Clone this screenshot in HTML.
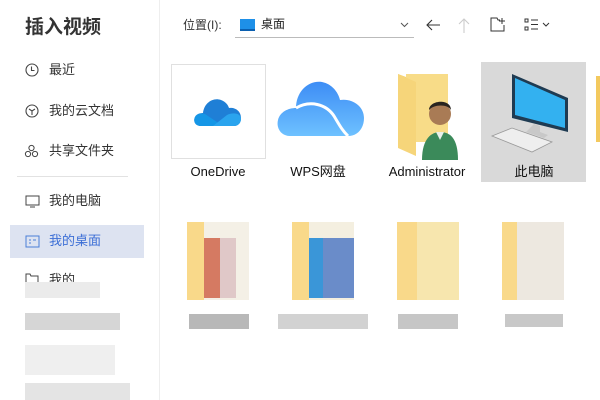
<!DOCTYPE html>
<html><head><meta charset="utf-8"><style>
*{margin:0;padding:0;box-sizing:border-box}
body{width:600px;height:400px;overflow:hidden;background:#fff;font-family:"Liberation Sans","Noto Sans CJK SC",sans-serif;position:relative;color:#222}
.a{position:absolute}
.side{font-size:13px;color:#333;line-height:16px}
.lbl{font-size:13px;color:#111;text-align:center;width:110px;line-height:16px}
.blk{position:absolute;background:#ccc}
</style></head><body>
<div class="a" style="left:25px;top:12px;font-size:19px;font-weight:bold;color:#333">插入视频</div>
<div class="a" style="left:159px;top:0;width:1px;height:400px;background:#eee"></div>

<svg class="a" style="left:25px;top:63px" width="14" height="14" viewBox="0 0 14 14"><circle cx="7" cy="7" r="6" fill="none" stroke="#444" stroke-width="1.1"/><path d="M6.5 3.5V7.5H9.5" fill="none" stroke="#444" stroke-width="1.1"/></svg>
<div class="a side" style="left:49px;top:62px">最近</div>
<svg class="a" style="left:25px;top:104px" width="14" height="14" viewBox="0 0 14 14"><circle cx="7" cy="7" r="6" fill="none" stroke="#444" stroke-width="1.1"/><path d="M4 5L7 7L10 5M7 7V11" fill="none" stroke="#444" stroke-width="1.1"/></svg>
<div class="a side" style="left:49px;top:103px">我的云文档</div>
<svg class="a" style="left:24px;top:144px" width="15" height="14" viewBox="0 0 15 14"><circle cx="7.5" cy="4" r="2.6" fill="none" stroke="#444"/><circle cx="4" cy="10" r="2.6" fill="none" stroke="#444"/><circle cx="11" cy="10" r="2.6" fill="none" stroke="#444"/></svg>
<div class="a side" style="left:49px;top:143px">共享文件夹</div>
<div class="a" style="left:17px;top:176px;width:111px;height:1px;background:#e2e2e2"></div>
<svg class="a" style="left:25px;top:195px" width="15" height="13" viewBox="0 0 15 13"><rect x="1" y="1" width="13" height="9" fill="none" stroke="#444"/><path d="M5 12H10" stroke="#444"/></svg>
<div class="a side" style="left:49px;top:193px">我的电脑</div>
<div class="a" style="left:10px;top:225px;width:134px;height:33px;background:#dde3f1"></div>
<svg class="a" style="left:25px;top:235px" width="15" height="13" viewBox="0 0 15 13"><rect x="1" y="1" width="13" height="11" fill="none" stroke="#4a7fd8"/><path d="M4 5H6M4 8H6M8 5H11" stroke="#4a7fd8"/></svg>
<div class="a side" style="left:49px;top:233px;color:#3d6fd6">我的桌面</div>
<svg class="a" style="left:25px;top:273px" width="14" height="12" viewBox="0 0 14 12"><path d="M1 11V1H5L6 3H13V11Z" fill="none" stroke="#444"/></svg>
<div class="a side" style="left:49px;top:272px">我的</div>
<div class="blk" style="left:25px;top:282px;width:75px;height:16px;background:#ebebeb"></div>
<div class="blk" style="left:25px;top:313px;width:95px;height:17px;background:#d6d6d6"></div>
<div class="blk" style="left:25px;top:345px;width:90px;height:30px;background:#efefef"></div>
<div class="blk" style="left:25px;top:383px;width:105px;height:17px;background:#e4e4e4"></div>

<div class="a" style="left:183px;top:18px;font-size:12px;color:#333;line-height:15px">位置(I):</div>
<div class="a" style="left:235px;top:37px;width:179px;height:1px;background:#bbb"></div>
<div class="a" style="left:240px;top:19px;width:15px;height:12px;background:#1e90e8;border-bottom:2px solid #0a5fb0"></div>
<div class="a" style="left:261px;top:17px;font-size:12px;color:#222;line-height:15px">桌面</div>
<svg class="a" style="left:400px;top:22px" width="9" height="6"><path d="M1 1L4.5 4.5L8 1" fill="none" stroke="#555"/></svg>
<svg class="a" style="left:425px;top:18px" width="16" height="14"><path d="M15 7H2M7 2L2 7L7 12" fill="none" stroke="#333" stroke-width="1.1"/></svg>
<svg class="a" style="left:457px;top:17px" width="14" height="16"><path d="M7 16V2M2 7L7 2L12 7" fill="none" stroke="#ccc" stroke-width="1.1"/></svg>
<svg class="a" style="left:490px;top:17px" width="16" height="15"><path d="M14 8V14H1V1H7L8 3H10M12 1V7M9 4H15" fill="none" stroke="#333"/></svg>
<svg class="a" style="left:524px;top:18px" width="28" height="14"><rect x="1" y="1" width="3" height="3" fill="none" stroke="#333"/><rect x="1" y="9" width="3" height="3" fill="none" stroke="#333"/><path d="M7 2H14M7 6.5H14M7 11H14M19 5L22 8L25 5" fill="none" stroke="#333"/></svg>

<div class="a" style="left:171px;top:64px;width:95px;height:95px;border:1px solid #e0e0e0"></div>
<svg class="a" style="left:193px;top:95px" width="50" height="34" viewBox="0 0 50 34"><path d="M8 31C2 31 0 26 2 22C4 18 9 18 10 18C11 8 20 2 28 5C33 7 35 10 36 13C42 12 48 16 48 23C48 28 45 31 41 31Z" fill="#1f7fd6"/><path d="M2 22C4 18 9 18 12 19L30 31H8C2 31 0 26 2 22Z" fill="#1596e6"/><path d="M20 31L34 20C40 17 48 18 48 24C48 28 45 31 41 31Z" fill="#2aa4ee"/></svg>
<div class="a lbl" style="left:163px;top:164px">OneDrive</div>
<svg class="a" style="left:276px;top:80px" width="90" height="56" viewBox="0 0 90 56"><defs><linearGradient id="g" x1="0" y1="0" x2="0" y2="1"><stop offset="0" stop-color="#3d8df5"/><stop offset="1" stop-color="#6ec1ff"/></linearGradient></defs><path d="M14 56C5 56 0 48 2 40C4 32 12 28 20 28C20 12 32 0 46 2C56 4 62 12 64 20C76 18 88 26 88 38C88 48 82 56 72 56Z" fill="url(#g)"/><path d="M20 28C34 20 50 24 58 36C64 46 66 50 72 56" fill="none" stroke="#fff" stroke-width="3"/></svg>
<div class="a lbl" style="left:263px;top:164px">WPS网盘</div>
<svg class="a" style="left:396px;top:72px" width="70" height="88" viewBox="0 0 70 88"><path d="M2 2L18 8V80L2 74Z" fill="#f2cf6a"/><path d="M10 2H52V70H10Z" fill="#f8dc88"/><path d="M2 2L20 10V84L2 76Z" fill="#f6d57a"/><circle cx="44" cy="42" r="11" fill="#a97b55"/><path d="M33 38C33 28 55 26 55 38C52 32 38 32 33 38Z" fill="#2a2520"/><path d="M26 88C26 66 36 60 44 60C54 60 62 66 62 88Z" fill="#3b8a5a"/><path d="M40 60H48L44 68Z" fill="#e8f0ea"/></svg>
<div class="a lbl" style="left:372px;top:164px">Administrator</div>
<div class="a" style="left:481px;top:62px;width:105px;height:120px;background:#d9d9d9"></div>
<svg class="a" style="left:490px;top:72px" width="90" height="82" viewBox="0 0 90 82"><path d="M22 2L78 26V60L22 46Z" fill="#1f3b52"/><path d="M25 6L75 28V56L25 43Z" fill="#33b1f0"/><path d="M44 52L50 54V60L58 63L54 66L36 60Z" fill="#c8c8c8"/><path d="M2 64L22 56L62 70L42 80Z" fill="#eee" stroke="#999" stroke-width=".8"/></svg>
<div class="a lbl" style="left:479px;top:164px">此电脑</div>
<div class="a" style="left:596px;top:76px;width:4px;height:66px;background:#f3c95e"></div>

<div class="a" style="left:187px;top:222px;width:62px;height:78px;background:#f4f0e6"></div>
<div class="a" style="left:187px;top:222px;width:17px;height:78px;background:#f9d98a"></div>
<div class="a" style="left:204px;top:238px;width:16px;height:60px;background:#d57a62"></div>
<div class="a" style="left:220px;top:238px;width:16px;height:60px;background:#e0c8c8"></div>
<div class="a" style="left:189px;top:314px;width:60px;height:15px;background:#b8b8b8"></div>

<div class="a" style="left:292px;top:222px;width:62px;height:78px;background:#f4efe0"></div>
<div class="a" style="left:292px;top:222px;width:17px;height:78px;background:#f9d98a"></div>
<div class="a" style="left:309px;top:238px;width:45px;height:60px;background:#6a8cc9"></div>
<div class="a" style="left:309px;top:238px;width:14px;height:60px;background:#3a96d8"></div>
<div class="a" style="left:278px;top:314px;width:90px;height:15px;background:#d2d2d2"></div>

<div class="a" style="left:397px;top:222px;width:62px;height:78px;background:#f7e6ae"></div>
<div class="a" style="left:397px;top:222px;width:20px;height:78px;background:#f9d98a"></div>
<div class="a" style="left:398px;top:314px;width:60px;height:15px;background:#c6c6c6"></div>

<div class="a" style="left:502px;top:222px;width:62px;height:78px;background:#ede8e0"></div>
<div class="a" style="left:502px;top:222px;width:15px;height:78px;background:#f9d98a"></div>
<div class="a" style="left:505px;top:314px;width:58px;height:13px;background:#c8c8c8"></div>
</body></html>
